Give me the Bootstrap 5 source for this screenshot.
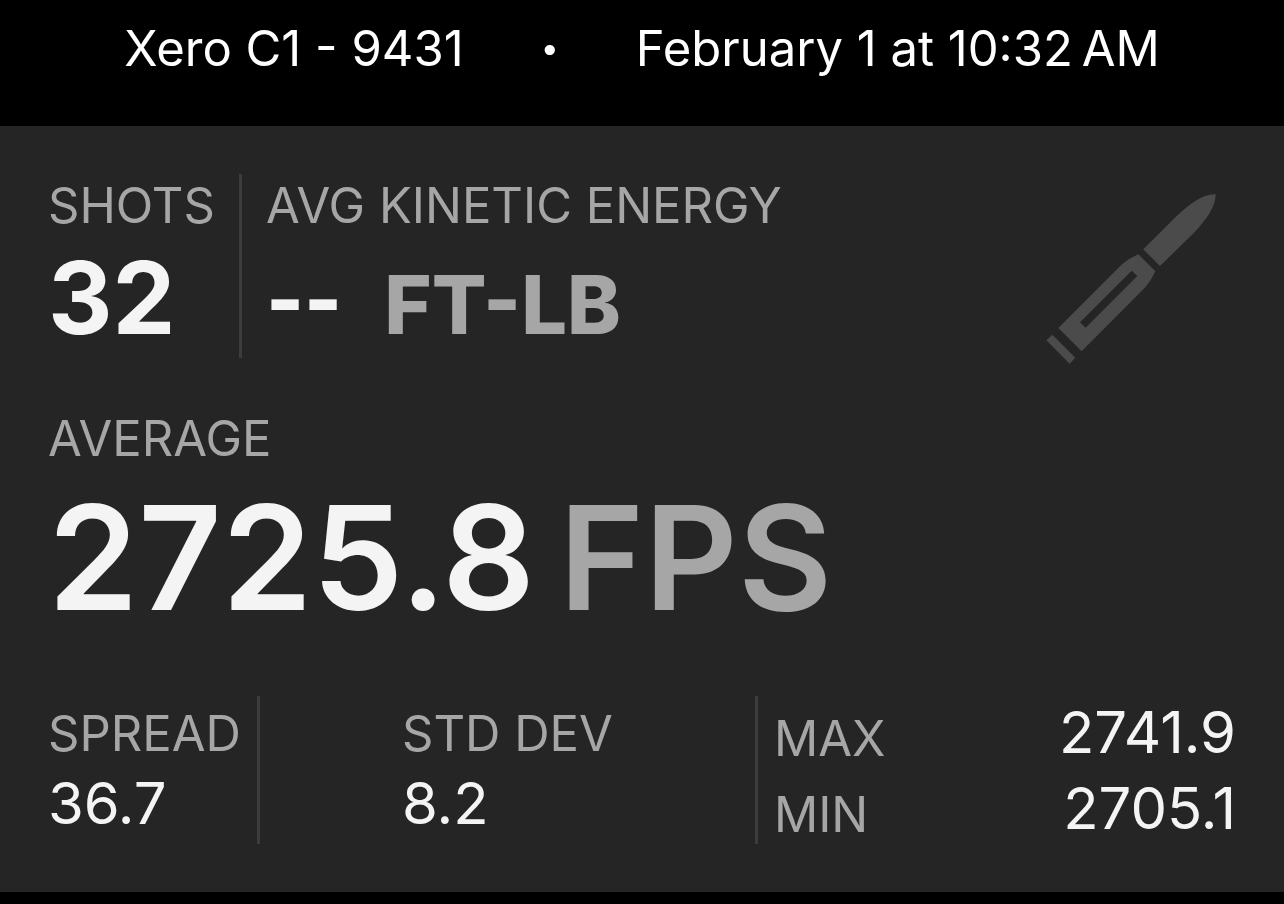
<!DOCTYPE html>
<html lang="en">
<head>
<meta charset="utf-8">
<meta name="viewport" content="width=device-width, initial-scale=1">
<title>Xero C1 - 9431</title>
<link href="https://cdn.jsdelivr.net/npm/bootstrap@5.3.0/dist/css/bootstrap.min.css" rel="stylesheet">
<style>
  body { background: #000; color: #f4f4f4; font-family: Inter, "Liberation Sans", sans-serif; }
  .session-bar { gap: 76px; padding: 17px 24px 45px; font-size: 49px; line-height: 64px; color: #fff; }
  .session-bar h1 { font: inherit; }
  .session-dot { font-size: 60px; font-weight: 700; }
  .stats-panel { background: #252525; padding: 48px; margin-bottom: 12px; }
  .stat-label { font-size: 49px; line-height: 64px; font-weight: 400; color: #a6a6a6; }
  .stat-value { font-size: 58px; line-height: 74px; }
  .stat-large { font-size: 100px; line-height: 120px; font-weight: 700; }
  .stat-energy { font-size: 81px; line-height: 1; font-weight: 800; font-feature-settings: "case"; }
  .stat-energy .stat-unit { margin-left: 42px; }
  .stat-hero { font-size: 145px; line-height: 174px; font-weight: 600; }
  .stat-unit { color: #a6a6a6; }
  .rule-start { border-left: 3px solid #3c3c3c; }
  .energy { margin-left: 24px; padding-left: 24px; }
  .cartridge { width: 170px; height: 170px; margin: 20px 20px 0 0; fill: #4b4b4b; }
  .average { margin-top: 43px; }
  .summary { margin-top: 51px; }
  .spread { padding: 6px 16px 4px 0; }
  .deviation { padding-top: 6px; }
  .extremes { flex: 0 0 40.5%; padding-left: 16px; gap: 4px; }
  .extremes .stat-label { line-height: 58px; }
  .extremes .stat-value { line-height: 72px; }
</style>
</head>
<body class="d-flex flex-column min-vh-100">
<header class="session-bar d-flex justify-content-center text-nowrap">
  <h1 class="m-0">Xero C1 - 9431</h1>
  <span class="session-dot" aria-hidden="true">·</span>
  <time>February 1 at 10:32&#8239;AM</time>
</header>
<main class="stats-panel flex-grow-1 text-nowrap">
  <section class="d-flex align-items-start">
    <dl class="m-0">
      <dt class="stat-label">SHOTS</dt>
      <dd class="stat-large m-0">32</dd>
    </dl>
    <dl class="energy rule-start mb-0 mt-0">
      <dt class="stat-label">AVG KINETIC ENERGY</dt>
      <dd class="stat-large m-0"><span class="stat-energy">--<span class="stat-unit">FT-LB</span></span></dd>
    </dl>
    <svg class="cartridge ms-auto flex-shrink-0" viewBox="48 42 510 510" role="img" aria-label="Rifle cartridge">
      <path d="M557 43C520 41 478 72 440 108L340 208L390 258L492 158C528 121 557 80 557 43Z"/>
      <path fill-rule="evenodd" d="M325 223L376 274Q364 301 346 322L155 514L85 444L276 253Q297 235 325 223ZM305 272L150 427L167 443L322 288Z"/>
      <path d="M67 464L136 533L119 551L49 481Z"/>
    </svg>
  </section>
  <dl class="average mb-0">
    <dt class="stat-label">AVERAGE</dt>
    <dd class="stat-hero m-0">2725.8<span class="stat-unit ms-4">FPS</span></dd>
  </dl>
  <section class="summary d-flex">
    <dl class="spread m-0">
      <dt class="stat-label">SPREAD</dt>
      <dd class="stat-value m-0">36.7</dd>
    </dl>
    <div class="deviation rule-start flex-grow-1 d-flex justify-content-center">
      <dl class="m-0">
        <dt class="stat-label">STD DEV</dt>
        <dd class="stat-value m-0">8.2</dd>
      </dl>
    </div>
    <dl class="extremes rule-start m-0 d-flex flex-column">
      <div class="d-flex justify-content-between align-items-end">
        <dt class="stat-label">MAX</dt>
        <dd class="stat-value m-0">2741.9</dd>
      </div>
      <div class="d-flex justify-content-between align-items-end">
        <dt class="stat-label">MIN</dt>
        <dd class="stat-value m-0">2705.1</dd>
      </div>
    </dl>
  </section>
</main>
<script src="https://cdn.jsdelivr.net/npm/bootstrap@5.3.0/dist/js/bootstrap.bundle.min.js"></script>
</body>
</html>
